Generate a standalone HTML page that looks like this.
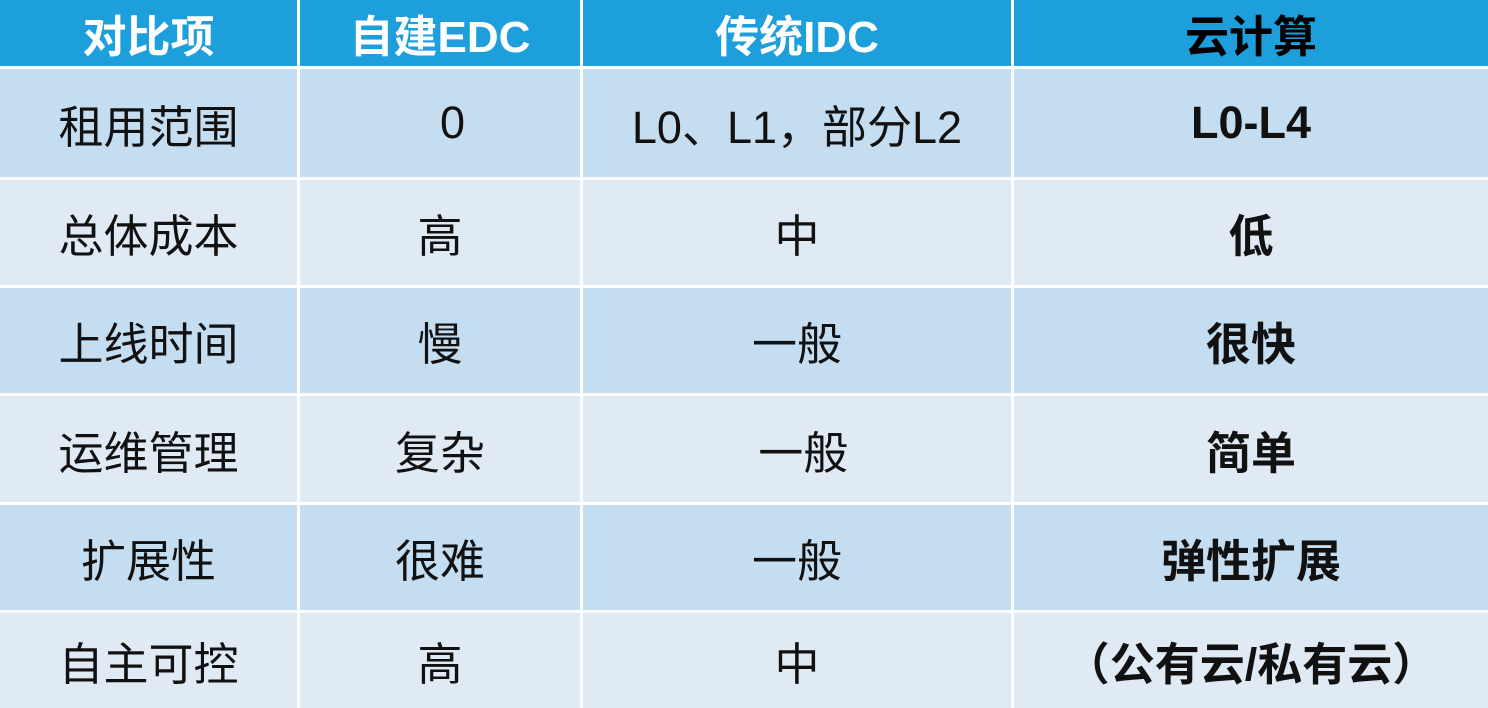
<!DOCTYPE html>
<html><head><meta charset="utf-8"><style>
body{margin:0;width:1488px;height:708px;overflow:hidden;background:#fff;font-family:"Liberation Sans","Noto Sans CJK SC",sans-serif}
.c{position:absolute;display:flex;align-items:center;justify-content:center;font-size:45px;color:#111}
.h{background:#1d9fdc;color:#fff;font-weight:bold;font-size:44px}
.o{background:#c4ddf0}.e{background:#e0eaf5}
.b{font-weight:bold}
</style></head><body>
<div id="t"></div>
<script>
const cols=[[0,297],[300,580],[583,1011],[1014,1488]];
const rows=[[0,66],[69,177],[180,285],[288,393],[396,502],[505,610],[613,708]];
const data=[
["对比项","自建EDC","传统IDC","云计算"],
["租用范围","&nbsp;&nbsp;0","L0、L1，部分L2","L0-L4"],
["总体成本","高","中","低"],
["上线时间","慢","一般","很快"],
["运维管理","复杂","&nbsp;一般","简单"],
["扩展性","很难","一般","弹性扩展"],
["自主可控","高","中","（公有云/私有云）"]];
let h="";
rows.forEach((r,i)=>cols.forEach((c,j)=>{
let cls=i==0?"h":(i%2?"o":"e");
if(j==3)cls+=" b";
let st=(i==0&&j==3)?"color:#000;":"";
h+=`<div class="c ${cls}" style="${st}left:${c[0]}px;top:${r[0]}px;width:${c[1]-c[0]}px;height:${r[1]-r[0]}px">${data[i][j]}</div>`;
}));
document.getElementById("t").innerHTML=h;
</script>
</body></html>
